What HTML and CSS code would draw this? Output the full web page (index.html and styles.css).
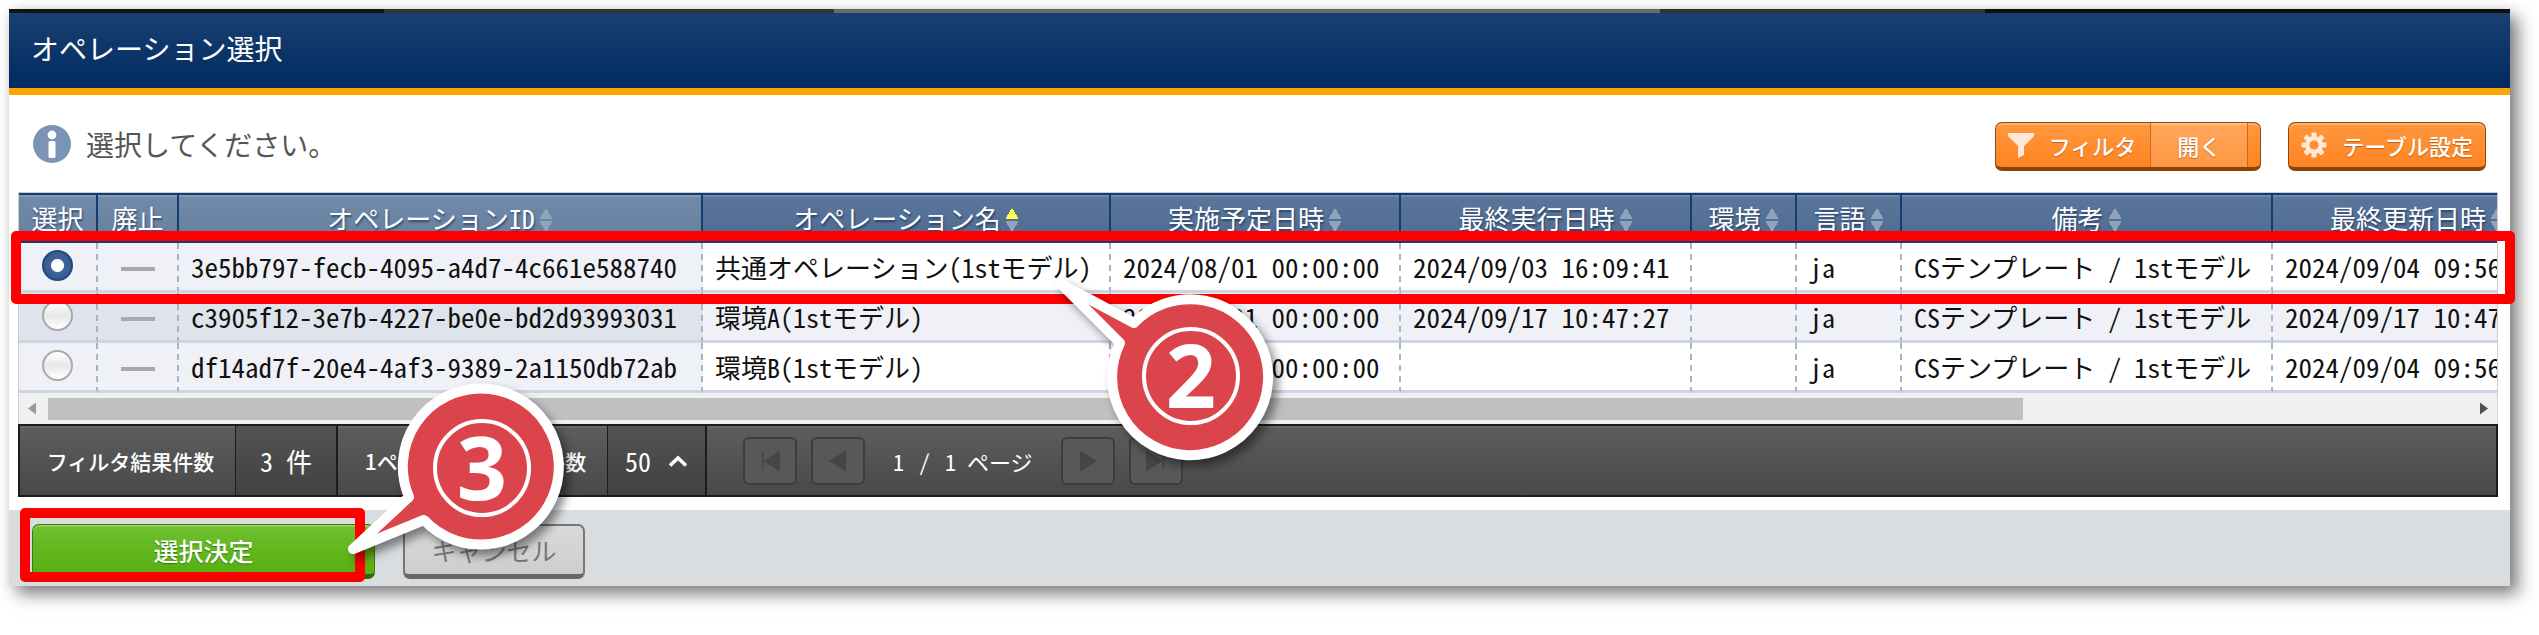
FILE: index.html
```html
<!DOCTYPE html>
<html lang="ja">
<head>
<meta charset="utf-8">
<title>オペレーション選択</title>
<link rel="stylesheet" href="styles.css">
</head>
<body>
<div class="stage">
<main class="dialog">
  <div class="backdrop-strip"></div>
  <header class="dialog-header"><h1>オペレーション選択</h1></header>

  <div class="toolbar">
    <svg class="info-icon" viewBox="0 0 38 38" aria-hidden="true"><circle cx="19" cy="19" r="19" fill="#7b94b5"/><circle cx="19" cy="10" r="4.4" fill="#fff"/><rect x="15.5" y="16" width="7" height="17" rx="1.5" fill="#fff"/></svg>
    <p class="message">選択してください。</p>
    <button class="tool-button filter-button" type="button">
      <svg class="tool-icon" viewBox="0 0 26 26" aria-hidden="true"><path d="M0 1h26v3L16 14v9l-6 3V14L0 4z" fill="#ffe9d6"/></svg>
      <span class="tool-label">フィルタ</span><span class="filter-state">開く</span>
    </button>
    <button class="tool-button" type="button">
      <svg class="tool-icon" viewBox="0 0 26 26" aria-hidden="true"><g fill="#ffe9d6"><g id="tooth"><rect x="10.5" y="0.5" width="5" height="25" rx="1"/><rect x="0.5" y="10.5" width="25" height="5" rx="1"/></g><use href="#tooth" transform="rotate(45 13 13)"/><circle cx="13" cy="13" r="9"/></g><circle cx="13" cy="13" r="4.6" fill="#ff8f36"/></svg>
      <span class="tool-label">テーブル設定</span>
    </button>
  </div>

  <section class="grid-panel">
    <div class="table-view">
      <table class="grid">
        <colgroup><col class="c-sel"><col class="c-del"><col class="c-id"><col class="c-name"><col class="c-plan"><col class="c-run"><col class="c-env"><col class="c-lang"><col class="c-note"><col class="c-upd"></colgroup>
        <thead>
          <tr>
            <th class="pin">選択</th><th class="pin">廃止</th>
            <th class="pin">オペレーションID<i class="sort"></i></th>
            <th>オペレーション名<i class="sort asc"></i></th>
            <th>実施予定日時<i class="sort"></i></th>
            <th>最終実行日時<i class="sort"></i></th>
            <th>環境<i class="sort"></i></th>
            <th>言語<i class="sort"></i></th>
            <th>備考<i class="sort"></i></th>
            <th>最終更新日時<i class="sort"></i></th>
          </tr>
        </thead>
        <tbody>
          <tr>
            <td class="pin mid"><input type="radio" name="operation" aria-label="共通オペレーション(1stモデル)" checked></td>
            <td class="pin mid"><span class="dash"></span></td>
            <td class="pin code">3e5bb797-fecb-4095-a4d7-4c661e588740</td>
            <td>共通オペレーション(1stモデル)</td>
            <td class="code">2024/08/01 00:00:00</td><td class="code">2024/09/03 16:09:41</td>
            <td></td><td>ja</td><td>CSテンプレート / 1stモデル</td><td class="code">2024/09/04 09:56:31</td>
          </tr>
          <tr>
            <td class="pin mid"><input type="radio" name="operation" aria-label="環境A(1stモデル)"></td>
            <td class="pin mid"><span class="dash"></span></td>
            <td class="pin code">c3905f12-3e7b-4227-be0e-bd2d93993031</td>
            <td>環境A(1stモデル)</td>
            <td class="code">2024/08/01 00:00:00</td><td class="code">2024/09/17 10:47:27</td>
            <td></td><td>ja</td><td>CSテンプレート / 1stモデル</td><td class="code">2024/09/17 10:47:27</td>
          </tr>
          <tr>
            <td class="pin mid"><input type="radio" name="operation" aria-label="環境B(1stモデル)"></td>
            <td class="pin mid"><span class="dash"></span></td>
            <td class="pin code">df14ad7f-20e4-4af3-9389-2a1150db72ab</td>
            <td>環境B(1stモデル)</td>
            <td class="code">2024/08/01 00:00:00</td><td></td>
            <td></td><td>ja</td><td>CSテンプレート / 1stモデル</td><td class="code">2024/09/04 09:56:31</td>
          </tr>
        </tbody>
      </table>
    </div>
    <div class="scrollbar">
      <i class="arrow left"></i><div class="track"><div class="thumb"></div></div><i class="arrow right"></i>
    </div>
    <div class="pager">
      <div class="pager-label">フィルタ結果件数</div><div class="pager-value total">3 件</div>
      <div class="pager-label second">1ページに表示する件数</div>
      <button class="pager-value size" type="button">50<svg viewBox="0 0 20 12" class="chevron" aria-hidden="true"><path d="M2 10.5 10 3l8 7.5" fill="none" stroke="#fff" stroke-width="3.6"/></svg></button>
      <nav class="pages">
        <button type="button" aria-label="最初"><svg viewBox="0 0 22 22"><path d="M3 1v20M21 1v20L6 11z"/></svg></button>
        <button type="button" aria-label="前へ"><svg viewBox="0 0 22 22"><path d="M19 1v20L3 11z"/></svg></button>
        <span class="page-text"><span>1</span><span>/</span><span>1 ページ</span></span>
        <button type="button" aria-label="次へ"><svg viewBox="0 0 22 22"><path d="M3 1v20l16-10z"/></svg></button>
        <button type="button" aria-label="最後"><svg viewBox="0 0 22 22"><path d="M19 1v20M1 1v20l15-10z"/></svg></button>
      </nav>
    </div>
  </section>

  <footer class="actions">
    <button class="action ok" type="button">選択決定</button>
    <button class="action cancel" type="button">キャンセル</button>
  </footer>
</main>

<div class="mark mark-row"></div>
<div class="mark mark-ok"></div>
<svg class="balloon balloon-two" viewBox="0 0 240 200">
  <path d="M86 47 13 8l59 59A78 78 0 1 0 86 47z" fill="#dc444b" stroke="#fff" stroke-width="10" stroke-linejoin="round"/>
  <circle cx="143" cy="100" r="47" fill="none" stroke="#fff" stroke-width="4"/>
  <text x="143" y="132" text-anchor="middle">2</text>
</svg>
<svg class="balloon balloon-three" viewBox="0 0 240 200">
  <path d="M69 129 13 181l71-29A78 78 0 1 0 69 129z" fill="#dc444b" stroke="#fff" stroke-width="10" stroke-linejoin="round"/>
  <circle cx="142" cy="100" r="47" fill="none" stroke="#fff" stroke-width="4"/>
  <text x="142" y="132" text-anchor="middle">3</text>
</svg>
</div>
</body>
</html>
```
FILE: styles.css
```css
* { box-sizing: border-box; }
body {
  margin: 0;
  background: #fff;
  font-family: "Noto Sans CJK JP", sans-serif;
  font-size: 26px;
  color: #111;
}
button { font: inherit; margin: 0; cursor: pointer; }
.stage { position: relative; padding: 9px 29px 48px 9px; overflow: hidden; }
.dialog { background: #fff; box-shadow: 8px 8px 16px rgba(0, 0, 0, .5), 0 0 10px rgba(0, 0, 0, .08); }

.backdrop-strip {
  height: 4px;
  background: linear-gradient(90deg, #141414 15%, #343434 15% 33%, #6a6a6a 33% 66%, #343434 66% 79%, #101010 79%);
}
.dialog-header {
  height: 82px;
  display: flex;
  align-items: center;
  padding: 0 22px 5px;
  background: linear-gradient(#1a4072, #002a60);
  border-bottom: 7px solid #ffa400;
}
.dialog-header h1 { margin: 0; font-size: 28px; font-weight: 400; color: #fff; }

.toolbar { display: flex; align-items: center; height: 97px; padding: 0 24px; }
.info-icon { width: 38px; height: 38px; }
.message { margin: 0 auto 0 15px; font-size: 28px; color: #555; }
.tool-button {
  height: 49px;
  display: flex;
  align-items: center;
  margin-top: 6px;
  padding: 0 12px;
  border: 1px solid #8a4a12;
  border-bottom: 4px solid #8a4308;
  border-radius: 7px;
  background: linear-gradient(#ff983f, #ff8421);
  box-shadow: inset 0 2px 0 #ffb06a;
  color: #fff;
  font-size: 22px;
  font-weight: 500;
  text-shadow: 0 1px 1px rgba(120, 60, 0, .5);
}
.tool-icon { width: 26px; height: 26px; }
.tool-label { margin-left: 15px; }
.filter-button { margin-right: 27px; }
.filter-state {
  align-self: stretch;
  display: flex;
  align-items: center;
  margin-left: 14px;
  padding: 0 26px;
  background: rgba(255, 255, 255, .15);
  border: solid #c8691c;
  border-width: 0 1px;
}

.grid-panel { margin: 0 12px 13px 9px; }
.table-view { overflow: hidden; border: 1px solid #c9cdd2; border-bottom: 0; }
.grid {
  width: 2544px;
  table-layout: fixed;
  border-collapse: separate;
  border-spacing: 0;
  font-feature-settings: "hwid";
  line-height: 30px;
}
.c-sel { width: 79px; }
.c-del { width: 81px; }
.c-id { width: 524px; }
.c-name { width: 408px; }
.c-plan { width: 290px; }
.c-run { width: 291px; }
.c-env, .c-lang { width: 105px; }
.c-note { width: 371px; }
.c-upd { width: 290px; }
.grid th {
  height: 50px;
  padding: 0;
  font-weight: 400;
  color: #fff;
  white-space: nowrap;
  text-shadow: 1px 2px 2px rgba(0, 20, 60, .5);
  background: linear-gradient(#5a769b, #506b91);
  border: solid #143d73;
  border-width: 2px 2px 2px 0;
  box-shadow: inset 0 2px 0 rgba(255, 255, 255, .15);
}
.grid th.pin { background: linear-gradient(#718aaa, #66809f); }
.sort {
  display: inline-block;
  width: 14px;
  height: 24px;
  margin-left: 4px;
  vertical-align: -3px;
  background:
    conic-gradient(from 149deg at 50% 0, #8fa3bb 62deg, transparent 0) top / 14px 11px no-repeat,
    conic-gradient(from -31deg at 50% 100%, #8fa3bb 62deg, transparent 0) bottom / 14px 11px no-repeat;
}
.sort.asc {
  background:
    conic-gradient(from 149deg at 50% 0, #ffff4a 62deg, transparent 0) top / 14px 11px no-repeat,
    conic-gradient(from -31deg at 50% 100%, #8fa3bb 62deg, transparent 0) bottom / 14px 11px no-repeat;
}
.grid td {
  height: 50px;
  padding: 0 12px;
  white-space: nowrap;
  background: #fff;
  border-right: 2px dashed #a3b4cd;
  border-bottom: 3px solid #ccd5e1;
}
.grid td.pin { background: #f0f1f6; }
.grid tr:nth-child(2) td { background: #f0f1f6; }
.grid tr:nth-child(2) td.pin { background: #dfe4ec; }
.grid td.code { font-size: 27px; }
.grid td.mid { text-align: center; padding: 0; }
.grid input {
  appearance: none;
  display: block;
  width: 31px;
  height: 31px;
  margin: 0 auto 3px;
  border: 2px solid #aaa;
  border-radius: 50%;
  background: linear-gradient(#fff, #e8e8e8 50%, #fff);
}
.grid input:checked { border-color: #234a7d; background: radial-gradient(circle, #fff 6px, #3f6497 7px, #2f5587); }
.dash { display: block; width: 34px; height: 4px; margin: 4px auto 0; background: #a9a9a9; }

.scrollbar { display: flex; align-items: center; height: 31px; padding: 0 9px; background: #f0f0f0; border: solid #d4d4d4; border-width: 0 1px; }
.track { flex: 1; margin: 0 12px; }
.thumb { width: 81.6%; height: 22px; background: #c0c0c0; }
.arrow { width: 8px; height: 12px; }
.arrow.left { background: #999; clip-path: polygon(100% 0, 100% 100%, 0 50%); }
.arrow.right { background: #505050; clip-path: polygon(0 0, 0 100%, 100% 50%); }

.pager {
  display: flex;
  height: 73px;
  border: 2px solid #1c1c1c;
  background: linear-gradient(#5c5d5c, #484a49);
  box-shadow: inset 0 2px 0 #6b6869;
  color: #fff;
  font-feature-settings: "hwid";
}
.pager-label { display: flex; align-items: center; justify-content: center; width: 215px; padding-left: 6px; font-size: 21px; font-weight: 500; }
.pager-label.second { width: 269px; font-feature-settings: normal; }
.pager-value {
  display: flex;
  align-items: center;
  justify-content: center;
  padding: 0;
  border: solid #1c1c1c;
  border-width: 0 2px 0 1px;
  background: linear-gradient(#525352, #404241);
  color: #fff;
  font-feature-settings: inherit;
}
.total { width: 103px; }
.size { width: 100px; gap: 17px; }
.chevron { width: 20px; height: 12px; }
.pages { display: flex; align-items: center; gap: 14px; padding-left: 36px; }
.pages button {
  display: flex;
  align-items: center;
  justify-content: center;
  width: 54px;
  height: 48px;
  padding: 0;
  border: 2px solid #3c3d3c;
  border-radius: 6px;
  background: #575857;
}
.pages svg { width: 20px; height: 20px; fill: #444649; stroke: #444649; stroke-width: 2px; }
.page-text { display: flex; gap: 15px; padding: 0 14px; font-size: 22px; }

.actions {
  display: flex;
  gap: 28px;
  height: 76px;
  padding: 14px 23px 7px;
  background: #d9dde0;
}
.action { border-radius: 7px; padding: 0; font-size: 25px; }
.ok {
  width: 343px;
  color: #fff;
  font-weight: 500;
  border: 1px solid #3d7a12;
  border-bottom: 5px solid #2f6a08;
  background: linear-gradient(#70bf30, #56b00f);
  box-shadow: inset 0 2px 0 #8ed058;
  text-shadow: 0 1px 1px rgba(0, 60, 0, .5);
}
.cancel {
  width: 182px;
  color: #777;
  border: 2px solid #777;
  border-bottom: 5px solid #666;
  background: linear-gradient(#dadada, #cdcdcd);
}

.mark { position: absolute; border: 10px solid #f00; border-radius: 5px; }
.mark-row { left: 11px; right: 24px; top: 231px; height: 73px; }
.mark-ok { left: 20px; top: 508px; width: 345px; height: 74px; }
.balloon {
  position: absolute;
  width: 240px;
  height: 200px;
  overflow: visible;
  filter: drop-shadow(5px 6px 5px rgba(0, 0, 0, .45));
}
.balloon text { font: 700 88px "Noto Sans", sans-serif; fill: #fff; }
.balloon-two { left: 1048px; top: 276px; }
.balloon-three { left: 340px; top: 368px; }
```
